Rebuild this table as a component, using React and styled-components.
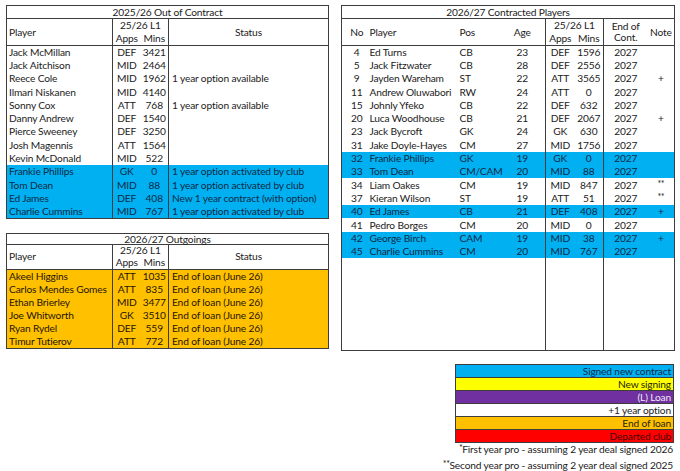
import styled, { createGlobalStyle } from "styled-components";

const GlobalStyle = createGlobalStyle`
  html, body {
    margin: 0;
    padding: 0;
    background: #ffffff;
  }
  body {
    font-family: "Lato", "Liberation Sans", sans-serif;
    font-size: 10.2px;
    letter-spacing: -0.15px;
    color: #1b1b1b;
  }
`;

const LINE = "#3d3d3d";

const outOfContract = [
  ["Jack McMillan", "DEF", "3421", ""],
  ["Jack Aitchison", "MID", "2464", ""],
  ["Reece Cole", "MID", "1962", "1 year option available"],
  ["Ilmari Niskanen", "MID", "4140", ""],
  ["Sonny Cox", "ATT", "768", "1 year option available"],
  ["Danny Andrew", "DEF", "1540", ""],
  ["Pierce Sweeney", "DEF", "3250", ""],
  ["Josh Magennis", "ATT", "1564", ""],
  ["Kevin McDonald", "MID", "522", ""],
  ["Frankie Phillips", "GK", "0", "1 year option activated by club", "blue"],
  ["Tom Dean", "MID", "88", "1 year option activated by club", "blue"],
  ["Ed James", "DEF", "408", "New 1 year contract (with option)", "blue"],
  ["Charlie Cummins", "MID", "767", "1 year option activated by club", "blue"],
];

const outgoings = [
  ["Akeel Higgins", "ATT", "1035"],
  ["Carlos Mendes Gomes", "ATT", "835"],
  ["Ethan Brierley", "MID", "3477"],
  ["Joe Whitworth", "GK", "3510"],
  ["Ryan Rydel", "DEF", "559"],
  ["Timur Tutierov", "ATT", "772"],
];

const contracted = [
  ["4", "Ed Turns", "CB", "23", "DEF", "1596", ""],
  ["5", "Jack Fitzwater", "CB", "28", "DEF", "2556", ""],
  ["9", "Jayden Wareham", "ST", "22", "ATT", "3565", "+"],
  ["11", "Andrew Oluwabori", "RW", "24", "ATT", "0", ""],
  ["15", "Johnly Yfeko", "CB", "22", "DEF", "632", ""],
  ["20", "Luca Woodhouse", "CB", "21", "DEF", "2067", "+"],
  ["23", "Jack Bycroft", "GK", "24", "GK", "630", ""],
  ["31", "Jake Doyle-Hayes", "CM", "27", "MID", "1756", ""],
  ["32", "Frankie Phillips", "GK", "19", "GK", "0", "", "blue"],
  ["33", "Tom Dean", "CM/CAM", "20", "MID", "88", "", "blue"],
  ["34", "Liam Oakes", "CM", "19", "MID", "847", "**"],
  ["37", "Kieran Wilson", "ST", "19", "ATT", "51", "**"],
  ["40", "Ed James", "CB", "21", "DEF", "408", "+", "blue"],
  ["41", "Pedro Borges", "CM", "20", "MID", "0", ""],
  ["42", "George Birch", "CAM", "19", "MID", "38", "+", "blue"],
  ["45", "Charlie Cummins", "CM", "20", "MID", "767", "", "blue"],
];

const legend = [
  ["Signed new contract", "#00b0f0", "#0e2a48"],
  ["New signing", "#ffff00", "#262400"],
  ["(L) Loan", "#7030a0", "#efe6f6"],
  ["+1 year option", "#ffffff", "#1b1b1b"],
  ["End of loan", "#ffc000", "#2a1f00"],
  ["Departed club", "#ff0000", "#4a0000"],
];

const rowBg = { blue: "#00b0f0", gold: "#ffc000" };
const rowInk = { blue: "#0e2a48", gold: "#1f1600" };

const Page = styled.div`
  display: flex;
  align-items: flex-start;
  gap: 13px;
  padding: 5px 6px;
`;

const LeftColumn = styled.div`
  display: flex;
  flex-direction: column;
  gap: 14px;
  width: 322px;
`;

const RightColumn = styled.div`
  display: flex;
  flex-direction: column;
  width: 333px;
`;

const Table = styled.table`
  width: ${(p) => p.$width}px;
  table-layout: fixed;
  border-collapse: collapse;
  border: 1px solid ${LINE};
  line-height: 11px;
  white-space: nowrap;
`;

const TitleCell = styled.th`
  height: ${(p) => (p.$compact ? 10 : 12)}px;
  line-height: ${(p) => (p.$compact ? 10 : 12)}px;
  padding: 0;
  font-weight: 400;
  text-align: center;
  border-bottom: 1px solid ${LINE};
`;

const HeadCell = styled.th`
  height: ${(p) => (p.$compact ? 12 : 13)}px;
  padding: 0 ${(p) => p.$pr || 0}px 0 ${(p) => p.$pl || 0}px;
  font-weight: 400;
  text-align: ${(p) => p.$align || "center"};
  vertical-align: middle;
  border-left: ${(p) => (p.$lineLeft ? `1px solid ${LINE}` : "none")};
  border-right: ${(p) => (p.$lineRight ? `1px solid ${LINE}` : "none")};
`;

const HeadRow = styled.tr`
  border-bottom: ${(p) => (p.$last ? `1px solid ${LINE}` : "none")};
`;

const Row = styled.tr`
  height: ${(p) => (p.$compact ? 13.2 : 13.3)}px;
  background: ${(p) => rowBg[p.$tone] || "transparent"};
  color: ${(p) => rowInk[p.$tone] || "inherit"};
`;

const Cell = styled.td`
  padding: 0 ${(p) => p.$pr || 0}px 0 ${(p) => p.$pl || 0}px;
  text-align: ${(p) => p.$align || "left"};
  overflow: hidden;
  border-left: ${(p) => (p.$lineLeft ? `1px solid ${LINE}` : "none")};
  border-right: ${(p) => (p.$lineRight ? `1px solid ${LINE}` : "none")};
`;

const FillerRow = styled.tr`
  height: ${(p) => p.$h}px;
`;

const Stars = styled.span`
  position: relative;
  top: -2px;
  font-size: 9px;
  line-height: 1;
  letter-spacing: -0.5px;
`;

const Legend = styled.div`
  align-self: flex-end;
  width: 217px;
  margin-top: 13px;
  border: 1px solid ${LINE};
  display: flex;
  flex-direction: column;
`;

const LegendItem = styled.div`
  height: 12px;
  line-height: 12px;
  padding-right: 2px;
  text-align: right;
  background: ${(p) => p.$bg};
  color: ${(p) => p.$ink};
  border-top: ${(p) => (p.$first ? "none" : `1px solid ${LINE}`)};
  white-space: nowrap;
`;

const Notes = styled.div`
  align-self: flex-end;
  padding-right: 1px;
  margin-top: -2px;
  text-align: right;
  line-height: 16px;
  white-space: nowrap;
`;

const Note = ({ value }) =>
  value === "**" ? <Stars>**</Stars> : value;

const SquadTable = ({ title, rows, tone, compact }) => (
  <Table $width={322}>
    <colgroup>
      <col style={{ width: 106 }} />
      <col style={{ width: 28 }} />
      <col style={{ width: 28 }} />
      <col style={{ width: 160 }} />
    </colgroup>
    <thead>
      <tr>
        <TitleCell colSpan={4} $compact={compact}>
          {title}
        </TitleCell>
      </tr>
      <HeadRow>
        <HeadCell rowSpan={2} $align="left" $pl={2} $compact={compact}>
          Player
        </HeadCell>
        <HeadCell colSpan={2} $lineLeft $lineRight $compact={compact}>
          25/26 L1
        </HeadCell>
        <HeadCell rowSpan={2} $compact={compact}>
          Status
        </HeadCell>
      </HeadRow>
      <HeadRow $last>
        <HeadCell $lineLeft $compact={compact}>
          Apps
        </HeadCell>
        <HeadCell $lineRight $compact={compact}>
          Mins
        </HeadCell>
      </HeadRow>
    </thead>
    <tbody>
      {rows.map(([name, pos, mins, status, rowTone]) => (
        <Row key={name} $tone={rowTone || tone} $compact={compact}>
          <Cell $pl={2}>{name}</Cell>
          <Cell $align="center" $lineLeft>
            {pos}
          </Cell>
          <Cell $align="center" $lineRight>
            {mins}
          </Cell>
          <Cell $pl={3}>{status}</Cell>
        </Row>
      ))}
    </tbody>
  </Table>
);

const ContractedTable = () => (
  <Table $width={333}>
    <colgroup>
      <col style={{ width: 26 }} />
      <col style={{ width: 88 }} />
      <col style={{ width: 50 }} />
      <col style={{ width: 40 }} />
      <col style={{ width: 29 }} />
      <col style={{ width: 29 }} />
      <col style={{ width: 44 }} />
      <col style={{ width: 27 }} />
    </colgroup>
    <thead>
      <tr>
        <TitleCell colSpan={8}>2026/27 Contracted Players</TitleCell>
      </tr>
      <HeadRow>
        <HeadCell rowSpan={2} $pl={4}>
          No
        </HeadCell>
        <HeadCell rowSpan={2} $align="left" $pl={2}>
          Player
        </HeadCell>
        <HeadCell rowSpan={2} $align="left" $pl={4}>
          Pos
        </HeadCell>
        <HeadCell rowSpan={2} $pr={6}>
          Age
        </HeadCell>
        <HeadCell colSpan={2} $lineLeft $lineRight>
          25/26 L1
        </HeadCell>
        <HeadCell rowSpan={2}>
          End of
          <br />
          Cont.
        </HeadCell>
        <HeadCell rowSpan={2}>Note</HeadCell>
      </HeadRow>
      <HeadRow $last>
        <HeadCell $lineLeft>Apps</HeadCell>
        <HeadCell $lineRight>Mins</HeadCell>
      </HeadRow>
    </thead>
    <tbody>
      {contracted.map(([no, name, pos, age, group, mins, note, tone]) => (
        <Row key={no} $tone={tone}>
          <Cell $align="center" $pl={4}>
            {no}
          </Cell>
          <Cell $pl={2}>{name}</Cell>
          <Cell $pl={4}>{pos}</Cell>
          <Cell $align="center" $pr={6}>
            {age}
          </Cell>
          <Cell $align="center" $lineLeft>
            {group}
          </Cell>
          <Cell $align="center" $lineRight>
            {mins}
          </Cell>
          <Cell $align="center">2027</Cell>
          <Cell $align="center">
            <Note value={note} />
          </Cell>
        </Row>
      ))}
      <FillerRow $h={92}>
        <Cell colSpan={4} />
        <Cell $lineLeft />
        <Cell $lineRight />
        <Cell colSpan={2} />
      </FillerRow>
    </tbody>
  </Table>
);

export default function App() {
  return (
    <>
      <GlobalStyle />
      <Page>
        <LeftColumn>
          <SquadTable title="2025/26 Out of Contract" rows={outOfContract} />
          <SquadTable
            title="2026/27 Outgoings"
            rows={outgoings.map(([n, p, m]) => [n, p, m, "End of loan (June 26)"])}
            tone="gold"
            compact
          />
        </LeftColumn>
        <RightColumn>
          <ContractedTable />
          <Legend>
            {legend.map(([label, bg, ink], i) => (
              <LegendItem key={label} $bg={bg} $ink={ink} $first={i === 0}>
                {label}
              </LegendItem>
            ))}
          </Legend>
          <Notes>
            <div>
              <Stars>*</Stars>First year pro - assuming 2 year deal signed 2026
            </div>
            <div>
              <Stars>**</Stars>Second year pro - assuming 2 year deal signed 2025
            </div>
          </Notes>
        </RightColumn>
      </Page>
    </>
  );
}
